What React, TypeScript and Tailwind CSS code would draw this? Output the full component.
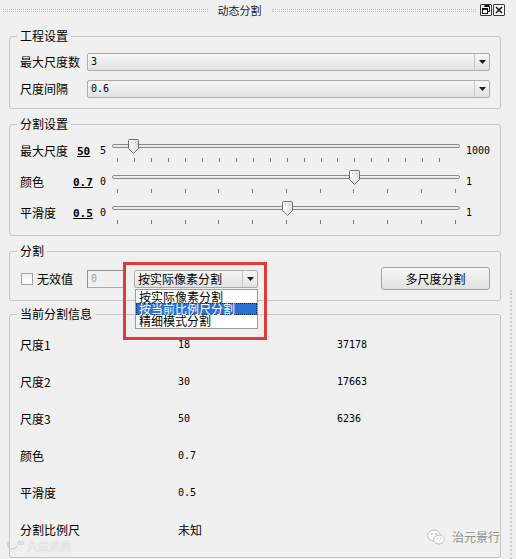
import React from "react";

const MONO = "font-['DejaVu_Sans_Mono',monospace] text-[10px]";

function Arrow() {
  return (
    <svg width="7" height="4" viewBox="0 0 7 4">
      <polygon points="0,0 7,0 3.5,4" fill="#1a1a1a" />
    </svg>
  );
}

function Combo({ text, className = "", mono = false }: { text: string; className?: string; mono?: boolean }) {
  return (
    <div
      className={`flex h-[18px] rounded-[2px] border border-[#acacac] bg-linear-to-b from-[#f6f6f6] to-[#e2e2e2] ${className}`}
    >
      <div className={`flex flex-1 items-center pl-[3px] ${mono ? MONO : ""}`}>{text}</div>
      <div className="flex w-[15px] items-center justify-center border-l border-[#c8c8c8]">
        <Arrow />
      </div>
    </div>
  );
}

function Slider({ frac, ticks, id }: { frac: number; ticks: number; id: string }) {
  const span = 337.5;
  const step = ticks === 20 ? (50 / 995) * span : span / 10;
  const xs = Array.from({ length: ticks }, (_, i) => Math.round(5 + i * step));
  const hx = Math.round(6 + frac * span);
  return (
    <svg width="348" height="24" viewBox="0 0 348 24">
      <defs>
        <linearGradient id={id} x1="0" y1="0" x2="1" y2="0">
          <stop offset="0" stopColor="#ffffff" />
          <stop offset="1" stopColor="#dcdcdc" />
        </linearGradient>
      </defs>
      <rect x="0.5" y="5.5" width="347" height="3" rx="1.5" fill="#ececec" stroke="#8a8a8a" />
      {xs.map((x, i) => (
        <line key={i} x1={x + 0.5} x2={x + 0.5} y1="19" y2="23" stroke="#7c7c7c" />
      ))}
      <g transform={`translate(${hx - 5},0)`}>
        <path
          d="M1.5 0.5 H9.5 Q10.5 0.5 10.5 1.5 V9.5 L5.5 14.5 L0.5 9.5 V1.5 Q0.5 0.5 1.5 0.5 Z"
          fill={`url(#${id})`}
          stroke="#707070"
        />
        <path d="M3 3.5 H3.8 M7.2 3.5 H8" stroke="#9a9a9a" />
      </g>
    </svg>
  );
}

function Group({ title, className = "", children }: { title: string; className?: string; children: React.ReactNode }) {
  return (
    <fieldset className={`rounded-[3px] border border-[#c6c6c6] ${className}`}>
      <legend className="ml-[7px] px-[3px] leading-[16px]">{title}</legend>
      {children}
    </fieldset>
  );
}

function SliderRow({
  label,
  value,
  min,
  max,
  frac,
  ticks,
  id,
  first = false,
}: {
  label: string;
  value: string;
  min: string;
  max: string;
  frac: number;
  ticks: number;
  id: string;
  first?: boolean;
}) {
  return (
    <div className="flex h-[24px] items-center">
      <span className="w-[53px]">{label}</span>
      <span className="w-[27px]">
        <span
          className={`font-['DejaVu_Sans_Mono',monospace] text-[11px] font-bold underline ${first ? "ml-[4px]" : ""}`}
        >
          {value}
        </span>
      </span>
      <span className={`w-[12px] ${MONO}`}>{min}</span>
      <Slider frac={frac} ticks={ticks} id={id} />
      <span className={`ml-[6px] ${MONO}`}>{max}</span>
    </div>
  );
}

const info: [string, string, string][] = [
  ["尺度1", "18", "37178"],
  ["尺度2", "30", "17663"],
  ["尺度3", "50", "6236"],
  ["颜色", "0.7", ""],
  ["平滑度", "0.5", ""],
  ["分割比例尺", "未知", ""],
];

const isNum = (s: string) => /^[0-9.]+$/.test(s);

export default function App() {
  return (
    <div className="relative h-[559px] w-[516px] overflow-hidden bg-[#f0f0f0] font-['Noto_Sans_CJK_SC',sans-serif] text-[12px] leading-[16px] text-black">
      {/* title bar */}
      <div className="flex h-[20px] items-center pl-[3px] pr-[11px]">
        <div className="h-[3px] flex-1 border-y border-dotted border-[#c4c4c4]" />
        <span className="px-[10px] text-[11px] leading-[14px] text-[#222]">动态分割</span>
        <div className="h-[3px] flex-1 border-y border-dotted border-[#c4c4c4]" />
        <div className="ml-[4px] flex gap-[1px]">
          <div className="flex h-[12px] w-[12px] items-center justify-center rounded-[1px] border border-[#3a3a3a] bg-[#f6f6f6]">
            <svg width="10" height="10" viewBox="0 0 10 10">
              <path d="M3.5 1.5 H8.5 V6.5 H7" fill="none" stroke="#111" />
              <path d="M3.5 1 H8.5" stroke="#111" strokeWidth="2" />
              <rect x="1.5" y="3.5" width="5" height="5" fill="none" stroke="#111" />
              <path d="M1.5 4 H6.5" stroke="#111" strokeWidth="2" />
            </svg>
          </div>
          <div className="flex h-[12px] w-[12px] items-center justify-center rounded-[1px] border border-[#3a3a3a] bg-[#f6f6f6]">
            <svg width="10" height="10" viewBox="0 0 10 10">
              <path d="M2 2 L8 8 M8 2 L2 8" stroke="#111" strokeWidth="1.6" />
            </svg>
          </div>
        </div>
      </div>

      {/* body */}
      <div className="flex h-[539px]">
        <div className="w-[501px] pl-[9px]">
          <Group title="工程设置" className="mt-[8px]">
            <div className="px-[10px] pt-[9px] pb-[10px]">
              <div className="flex items-center">
                <span className="w-[67px]">最大尺度数</span>
                <Combo text="3" className="flex-1" mono />
              </div>
              <div className="mt-[9px] flex items-center">
                <span className="w-[67px]">尺度间隔</span>
                <Combo text="0.6" className="flex-1" mono />
              </div>
            </div>
          </Group>

          <Group title="分割设置" className="mt-[7px]">
            <div className="flex flex-col gap-[7px] px-[10px] pt-[7px] pb-[10px]">
              <SliderRow label="最大尺度" value="50" min="5" max="1000" frac={45 / 995} ticks={20} id="h1" first />
              <SliderRow label="颜色" value="0.7" min="0" max="1" frac={0.7} ticks={11} id="h2" />
              <SliderRow label="平滑度" value="0.5" min="0" max="1" frac={0.5} ticks={11} id="h3" />
            </div>
          </Group>

          <Group title="分割" className="mt-[7px]">
            <div className="flex h-[41px] items-center px-[10px] pt-[8px] pb-[10px]">
              <div className="ml-[1px] h-[12px] w-[12px] border border-[#a2a2a2] bg-linear-to-b from-[#f0f0f0] to-white" />
              <span className="ml-[4px]">无效值</span>
              <div className="ml-[14px] flex h-[18px] w-[37px] items-center border border-[#a8a8a8] border-t-[#8e8e8e] border-l-[#8e8e8e] pl-[3px]">
                <span className={`${MONO} text-[#a0a0a0]`}>0</span>
              </div>
              <div className="relative ml-[10px]">
                <Combo text="按实际像素分割" className="w-[124px]" />
                <div className="absolute left-[1px] top-[19px] z-10 w-[123px] border border-[#9c9c9c] bg-white py-[1px] leading-[12px]">
                  <div className="h-[12px] pl-[3px]">按实际像素分割</div>
                  <div className="h-[12px] border border-dotted border-[#0b2f66] bg-[#2a6fd3] pl-[2px] leading-[10px] text-white">
                    按当前比例尺分割
                  </div>
                  <div className="h-[12px] pl-[3px]">精细模式分割</div>
                </div>
                <div className="pointer-events-none absolute left-[-11px] top-[-8px] z-20 h-[78px] w-[144px] border-[3px] border-[#e13a3d]" />
              </div>
              <div className="flex-1" />
              <div className="flex h-[23px] w-[109px] items-center justify-center rounded-[3px] border border-[#a4a4a4] bg-linear-to-b from-[#f7f7f7] to-[#e1e1e1]">
                多尺度分割
              </div>
            </div>
          </Group>

          <Group title="当前分割信息" className="mt-[5px]">
            <div className="px-[10px] pt-[4px] pb-[9px]">
              {info.map(([a, b, c]) => (
                <div key={a} className="grid h-[37px] grid-cols-[158px_159px_1fr] items-center">
                  <span>{a}</span>
                  <span className={isNum(b) ? MONO : ""}>{b}</span>
                  <span className={MONO}>{c}</span>
                </div>
              ))}
            </div>
          </Group>
        </div>
        <div className="flex flex-1 flex-col">
          <div className="h-[270px]" />
          <div className="ml-[9px] flex-1 border-l-2 border-dotted border-[#cfcfcf]" />
        </div>
      </div>

      {/* watermarks */}
      <div className="absolute left-[427px] top-[529px] flex items-center gap-[7px]">
        <svg width="18" height="16" viewBox="0 0 18 16">
          <ellipse cx="7" cy="6.5" rx="6.3" ry="5.5" fill="#fafafa" stroke="#bdbdbd" />
          <ellipse cx="12" cy="10.5" rx="5.3" ry="4.5" fill="#ffffff" stroke="#bdbdbd" />
          <circle cx="5" cy="5" r="0.9" fill="#bdbdbd" />
          <circle cx="9" cy="5" r="0.9" fill="#bdbdbd" />
          <circle cx="10.5" cy="9.5" r="0.7" fill="#bdbdbd" />
          <circle cx="13.5" cy="9.5" r="0.7" fill="#bdbdbd" />
        </svg>
        <span className="text-[12px] text-[#8d8d8d]">治元景行</span>
      </div>
      <div className="absolute left-[6px] top-[540px] flex items-center gap-[3px]">
        <svg width="18" height="12" viewBox="0 0 18 12">
          <path d="M2 2 Q1 10 8 9 L11 6" fill="none" stroke="#d0d0d0" strokeWidth="1.5" />
          <circle cx="13" cy="3" r="1.5" fill="none" stroke="#d0d0d0" />
          <circle cx="16" cy="3" r="1.5" fill="none" stroke="#d0d0d0" />
        </svg>
        <span className="text-[11px] leading-[12px] text-[#f4f4f4] [text-shadow:0_0_1px_#b0b0b0]">六盘遥感</span>
      </div>
    </div>
  );
}
